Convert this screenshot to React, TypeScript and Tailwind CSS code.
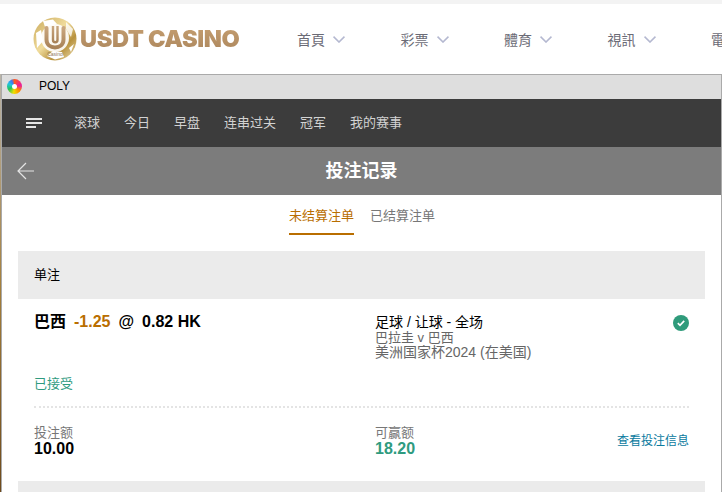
import React from 'react';

const FONT = "font-['Liberation_Sans','Noto_Sans_CJK_SC',sans-serif]";

const siteNav = ['首頁', '彩票', '體育', '視訊'];
const sportNav = ['滚球', '今日', '早盘', '连串过关', '冠军', '我的赛事'];

const Logo = () => (
  <div className="flex items-center w-[264px] shrink-0">
    <svg width="44" height="44" viewBox="0 0 44 44" className="shrink-0">
      <defs>
        <linearGradient id="gold" x1="0" y1="0" x2="1" y2="1">
          <stop offset="0" stopColor="#c9a95c" />
          <stop offset="0.45" stopColor="#f0dc9c" />
          <stop offset="0.7" stopColor="#b8923e" />
          <stop offset="1" stopColor="#f2e4b8" />
        </linearGradient>
        <linearGradient id="tan" x1="0" y1="0" x2="0" y2="1">
          <stop offset="0" stopColor="#c9a67e" />
          <stop offset="1" stopColor="#a98358" />
        </linearGradient>
      </defs>
      <circle cx="22" cy="22" r="21.5" fill="url(#gold)" />
      <path d="M10 4 L20 2.5 L24 7 L12 10 Z" fill="#fff" />
      <path d="M3 16 L8 13 L10 24 L4 31 Z" fill="#fff" />
      <path d="M33 5 L40 12 L38 20 L33 12 Z" fill="#fff" opacity="0.8" />
      <path d="M14 39 L20 34 L29 35 L31 40 L22 42.5 Z" fill="#fff" />
      <path d="M36 31 L41 27 L38 35 Z" fill="#fff" />
      <circle cx="22" cy="21" r="14" fill="#fff" opacity="0.9" />
      <path d="M13.5 11 V22.5 C13.5 33 30.5 33 30.5 22.5 V11" fill="none" stroke="url(#tan)" strokeWidth="4" strokeLinecap="round" />
      <path d="M20 9 V23 C20 26 24.5 26 24.5 23 V9" fill="none" stroke="url(#tan)" strokeWidth="2.4" />
      <text x="22" y="38.5" textAnchor="middle" fontSize="5" fill="#8a7458">Casino</text>
    </svg>
    <span className="ml-[3px] font-['Inter',sans-serif] text-[23.6px] font-black tracking-[-0.4px] bg-gradient-to-b from-[#c9a273] to-[#a8835a] bg-clip-text text-transparent whitespace-nowrap">
      USDT CASINO
    </span>
  </div>
);

const NavChevron = () => (
  <svg width="12" height="7" viewBox="0 0 12 7" className="ml-2 mt-px" fill="none" stroke="#b4b8d0" strokeWidth="1.6">
    <path d="M0.5 0.7 L6 6 L11.5 0.7" />
  </svg>
);

const App = () => {
  return (
    <div className={`${FONT} w-[722px] h-[492px] overflow-hidden bg-white`}>
      <div className="h-1 bg-[#f3f3f3]" />

      <header className="h-[70px] flex items-center pl-[33px] overflow-hidden">
        <Logo />
        {siteNav.map((label) => (
          <div key={label} className="w-[103.5px] shrink-0 flex items-center text-sm text-[#6b6b76]">
            <span className="font-['Noto_Sans_CJK_TC',sans-serif]">{label}</span>
            <NavChevron />
          </div>
        ))}
        <span className="shrink-0 text-sm text-[#6b6b76] font-['Noto_Sans_CJK_TC',sans-serif]">電子</span>
      </header>

      <div className="h-[418px] pl-px bg-gradient-to-b from-[#b9b4a8] via-[#a5803c] to-[#6e4a1c]">
        <div className="h-full border-t border-r border-l border-[#aaaaaa] bg-white">
          <div className="h-6 bg-[#dedede] flex items-center pl-[5px] pb-[2px]">
            <div className="w-[15px] h-[15px] rounded-full bg-[conic-gradient(#ff5a1e,#e81ea0_22%,#ff8a00_36%,#f0e000_52%,#22c55e_68%,#22c5e0_82%,#3a7cf6_92%,#ff5a1e)] flex items-center justify-center">
              <div className="w-[5px] h-[5px] rounded-full bg-white" />
            </div>
            <span className="ml-[17px] text-xs text-black">POLY</span>
          </div>

          <nav className="h-12 bg-[#3c3c3c] flex items-center pl-[24px]">
            <div className="w-4 mr-8 flex flex-col gap-[2px]">
              <span className="h-[2px] w-4 bg-[#e6e6e6]" />
              <span className="h-[2px] w-4 bg-[#e6e6e6]" />
              <span className="h-[2px] w-[10px] bg-[#e6e6e6]" />
            </div>
            <div className="flex gap-6">
              {sportNav.map((label) => (
                <span key={label} className="text-[13px] text-[#d2d2d2]">{label}</span>
              ))}
            </div>
          </nav>

          <div className="h-12 bg-[#7c7c7c] relative flex items-center justify-center">
            <svg width="18" height="18" viewBox="0 0 18 18" className="absolute left-[15px] top-[15px]" fill="none" stroke="#e4e4e4" strokeWidth="1.2">
              <path d="M17 9 H1 M9 1 L1 9 L9 17" />
            </svg>
            <h1 className="text-lg font-bold text-white">投注记录</h1>
          </div>

          <div className="flex justify-center gap-4 h-10 pl-px text-[13px]">
            <div className="pt-[11px] border-b-2 border-[#b96e00] text-[#b96e00]">未结算注单</div>
            <div className="pt-[11px] text-[#777777]">已结算注单</div>
          </div>

          <div className="ml-[16px] mr-[16px] mt-4">
            <div className="h-12 bg-[#ebebeb] flex items-center px-4 text-[13px] text-black">单注</div>

            <div className="px-4 pt-[13px]">
              <div className="flex h-[62px]">
                <div className="w-[341px] flex items-baseline font-bold text-black text-base leading-5">
                  <span>巴西</span>
                  <span className="ml-2 text-[#b96e00]">-1.25</span>
                  <span className="ml-2">@</span>
                  <span className="ml-2">0.82 HK</span>
                </div>
                <div className="flex-1 text-sm leading-[15px] text-[#666666] pt-[3px]">
                  <div className="text-black">足球 / 让球 - 全场</div>
                  <div className="text-[13px]">巴拉圭 v 巴西</div>
                  <div>美洲国家杯2024 (在美国)</div>
                </div>
                <svg width="16" height="16" viewBox="0 0 16 16" className="mt-[3px] shrink-0">
                  <circle cx="8" cy="8" r="8" fill="#2f9b7b" />
                  <path d="M4.8 8.2 L7 10.3 L11.2 5.9" fill="none" stroke="#fff" strokeWidth="1.7" />
                </svg>
              </div>
              <div className="text-[13px] leading-5 text-[#2f9b7f]">已接受</div>

              <div className="mt-[12px] border-t-2 border-dotted border-[#e4e4e4]" />

              <div className="flex items-center mt-4 h-[34px]">
                <div className="w-[341px] text-[13px] leading-[15px] text-[#777777]">
                  <div>投注额</div>
                  <div className="text-base leading-[18px] font-bold text-black">10.00</div>
                </div>
                <div className="flex-1 text-[13px] leading-[15px] text-[#777777]">
                  <div>可赢额</div>
                  <div className="text-base leading-[18px] font-bold text-[#2f9b7f]">18.20</div>
                </div>
                <span className="text-xs text-[#0a7a9e]">查看投注信息</span>
              </div>
            </div>

            <div className="mt-[23px] h-4 bg-[#ebebeb]" />
          </div>
        </div>
      </div>
    </div>
  );
};

export default App;
